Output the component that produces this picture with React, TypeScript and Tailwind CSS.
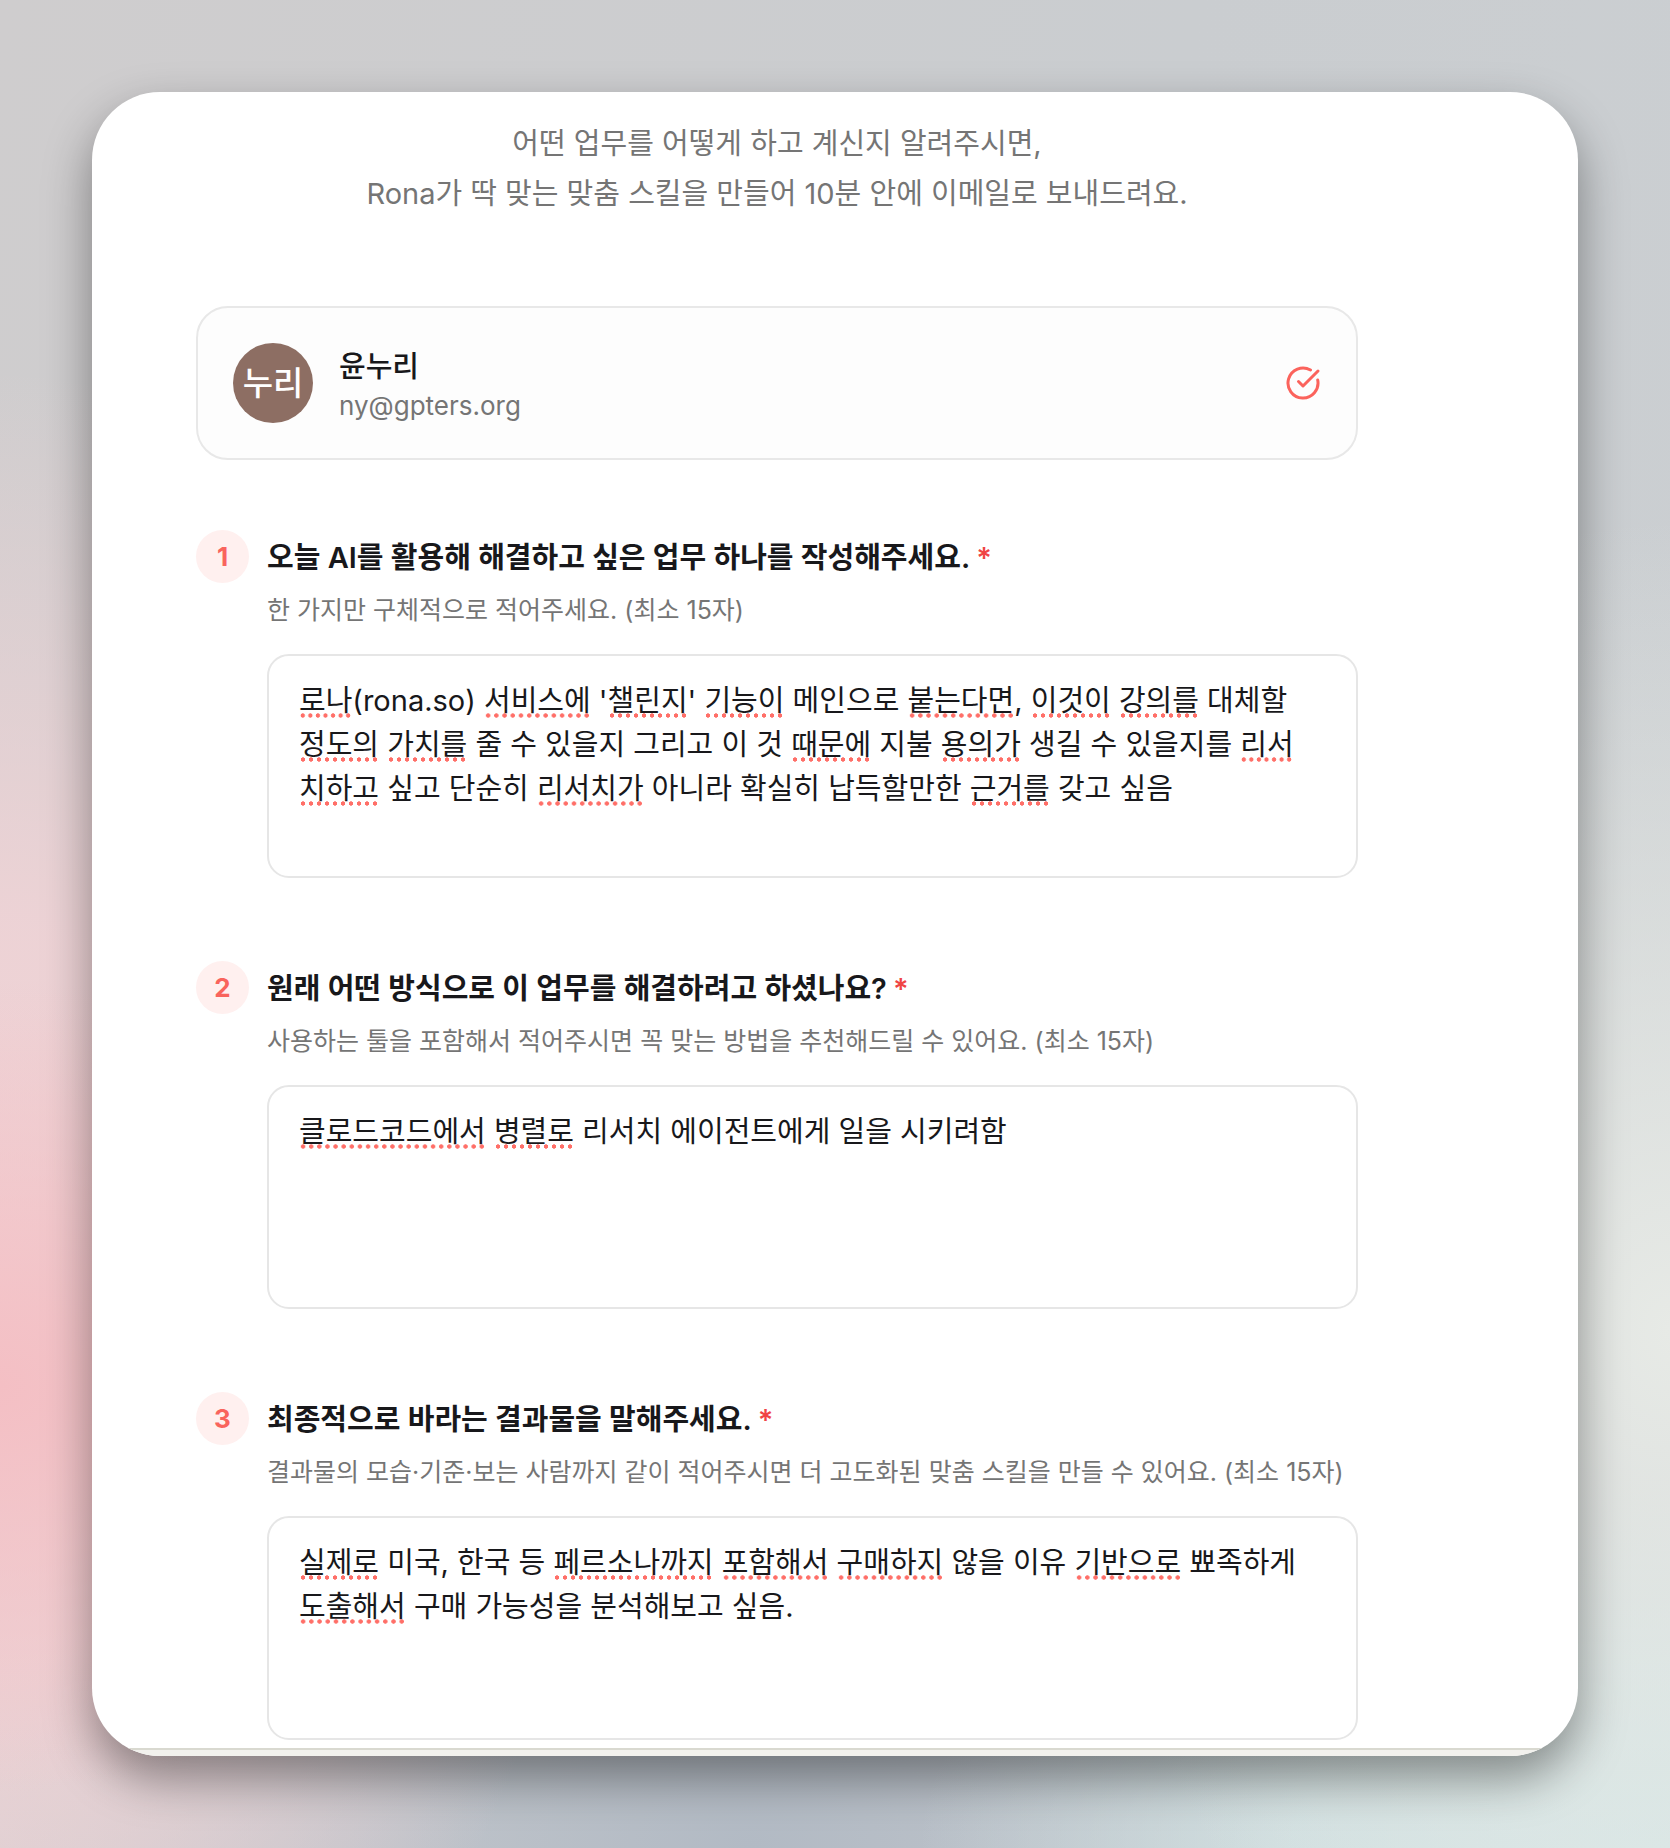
import { useLayoutEffect, useRef, useState } from "react";
import { CircleCheckBig } from "lucide-react";

type Question = { id: string; title: string; hint: string; answer: string };
type Mark = { left: number; bottom: number; width: number };

// Square brackets mark the words that the spelling checker underlines.
const questions: Question[] = [
  {
    id: "task",
    title: "오늘 AI를 활용해 해결하고 싶은 업무 하나를 작성해주세요.",
    hint: "한 가지만 구체적으로 적어주세요. (최소 15자)",
    answer:
      "[로나](rona.so) [서비스에] '[챌린지]' [기능이] 메인으로 [붙는다면], [이것이] [강의를] 대체할 [정도의] [가치를] 줄 수 있을지 그리고 이 것 [때문에] 지불 [용의가] 생길 수 있을지를 [리서치하고] 싶고 단순히 [리서치가] 아니라 확실히 납득할만한 [근거를] 갖고 싶음",
  },
  {
    id: "method",
    title: "원래 어떤 방식으로 이 업무를 해결하려고 하셨나요?",
    hint: "사용하는 툴을 포함해서 적어주시면 꼭 맞는 방법을 추천해드릴 수 있어요. (최소 15자)",
    answer: "[클로드코드에서] [병렬로] 리서치 에이전트에게 일을 시키려함",
  },
  {
    id: "result",
    title: "최종적으로 바라는 결과물을 말해주세요.",
    hint: "결과물의 모습·기준·보는 사람까지 같이 적어주시면 더 고도화된 맞춤 스킬을 만들 수 있어요. (최소 15자)",
    answer:
      "[실제로] 미국, 한국 등 [페르소나까지] [포함해서] [구매하지] 않을 이유 [기반으로] 뾰족하게 [도출해서] 구매 가능성을 분석해보고 싶음.",
  },
];

const answerText =
  "border-2 pr-10 pl-[30px] py-[23px] text-[29px] leading-[44px] break-normal whitespace-pre-wrap";

// Lays the answer out in a temporary copy of the text box and reads where the marked words fall.
function measureMarks(host: HTMLElement, answer: string): Mark[] {
  const copy = document.createElement("div");
  copy.className = answerText + " invisible absolute inset-0";
  const words: HTMLSpanElement[] = [];
  answer.split(/[[\]]/).forEach((part, i) => {
    const span = document.createElement("span");
    span.textContent = part;
    copy.appendChild(span);
    if (i % 2 === 1) words.push(span);
  });
  host.appendChild(copy);
  const origin = host.getBoundingClientRect();
  const marks = words.flatMap((word) =>
    Array.from(word.getClientRects()).map((r) => ({
      left: Math.round(r.left - origin.left),
      bottom: Math.round(r.bottom - origin.top),
      width: Math.round(r.width),
    })),
  );
  host.removeChild(copy);
  return marks;
}

function AnswerBox({ question }: { question: Question }) {
  const initial = question.answer.replace(/[[\]]/g, "");
  const [value, setValue] = useState(initial);
  const [marks, setMarks] = useState<Mark[]>([]);
  const host = useRef<HTMLDivElement>(null);

  useLayoutEffect(() => {
    const el = host.current;
    if (!el) return;
    const update = () => setMarks(measureMarks(el, question.answer));
    update();
    const observer = new ResizeObserver(update);
    observer.observe(el);
    return () => observer.disconnect();
  }, [question.answer]);

  return (
    <div ref={host} className="relative mt-[26px]">
      <textarea
        id={question.id}
        rows={4}
        spellCheck={false}
        value={value}
        onChange={(e) => setValue(e.target.value)}
        aria-describedby={question.id + "-hint"}
        className={
          answerText +
          " block h-56 w-full resize-none overflow-hidden rounded-[22px] border-[#e6e6e6] bg-white text-[#18181b] outline-none"
        }
      />
      {value === initial &&
        marks.map((m, i) => (
          <span
            key={i}
            aria-hidden="true"
            className="pointer-events-none absolute h-[5px] -translate-y-full bg-[radial-gradient(circle_closest-side,#ff6f68_75%,transparent)] bg-[length:8px_5px] [background-repeat:round_no-repeat]"
            style={{ left: m.left, top: m.bottom, width: m.width }}
          />
        ))}
    </div>
  );
}

export default function App() {
  return (
    <div className="flex min-h-screen flex-col bg-[#cfd1d3] bg-[radial-gradient(ellipse_30%_22%_at_0%_75%,#f4bfc4_0%,#f4bfc400_100%),radial-gradient(ellipse_36%_50%_at_0%_70%,#f0d3d6_0%,#f0d3d6e6_40%,#f0d3d600_100%),radial-gradient(ellipse_36%_44%_at_100%_72%,#e7eae6_0%,#e7eae600_100%),radial-gradient(ellipse_45%_20%_at_100%_100%,#d4e5e5_0%,#d4e5e5cc_50%,#d4e5e500_100%),radial-gradient(ellipse_45%_30%_at_45%_100%,#b2bac4_0%,#b2bac400_100%),linear-gradient(100deg,#cfcdce_0%,#cacdd0_60%,#cbcfd2_100%)] p-[92px] font-['Inter','Noto_Sans_CJK_KR',sans-serif] text-[#18181b]">
      <main className="flex flex-1 flex-col overflow-hidden rounded-[68px] bg-white shadow-[0_22px_48px_rgba(0,0,0,0.4)]">
        <div className="flex-1 pt-[27px] pr-[220px] pl-[104px]">
          <p className="text-center text-[29px] leading-[50px] text-[#757575]">
            어떤 업무를 어떻게 하고 계신지 알려주시면,
            <br />
            Rona가 딱 맞는 맞춤 스킬을 만들어 10분 안에 이메일로 보내드려요.
          </p>

          <section className="mt-[87px] flex items-center rounded-[32px] border-2 border-[#e8e8e8] bg-[#fdfdfd] p-[35px]">
            <div className="flex size-20 shrink-0 items-center justify-center rounded-full bg-[#8d6e63] pt-0.5 text-[33px] font-medium text-white">
              누리
            </div>
            <div className="ml-[26px] flex-1 pt-0.5">
              <p className="text-[29px] leading-[44px] font-medium">윤누리</p>
              <p className="text-[26px] leading-[34px] text-[#757575]">ny@gpters.org</p>
            </div>
            <CircleCheckBig className="size-9 text-[#fb635c]" aria-label="확인됨" />
          </section>

          <form className="mt-[70px] flex flex-col gap-[83px]">
            {questions.map((q, i) => (
              <div key={q.id} className="grid grid-cols-[53px_1fr] gap-x-[18px]">
                <span className="flex size-[53px] items-center justify-center rounded-full bg-[#fff0ef] text-[26px] font-bold text-[#f9645d]">
                  {i + 1}
                </span>
                <div className="pt-0.5">
                  <label htmlFor={q.id} className="block text-[29px] leading-[52px] font-semibold">
                    {q.title}
                    <span className="ml-1.5 text-[#f04444]">*</span>
                  </label>
                  <p id={q.id + "-hint"} className="mt-2 text-[25px] leading-9 text-[#757575]">
                    {q.hint}
                  </p>
                  <AnswerBox question={q} />
                </div>
              </div>
            ))}
          </form>
        </div>
        <div className="h-2 border-t-2 border-[#d9d9d0] bg-[#f2f1ed]" />
      </main>
    </div>
  );
}
